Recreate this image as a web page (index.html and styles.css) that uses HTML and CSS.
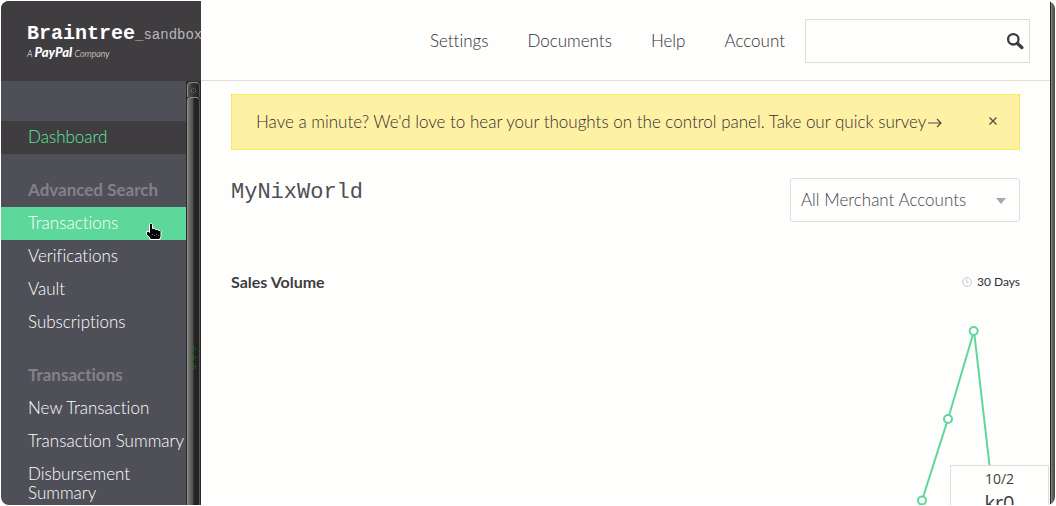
FILE: index.html
```html
<!DOCTYPE html>
<html lang="en">
<head>
<meta charset="utf-8">
<title>Braintree Sandbox - Dashboard</title>
<link rel="stylesheet" href="styles.css">
</head>
<body>
<div class="app">
  <aside class="sidebar">
    <a class="brand" href="#">
      <span class="brand-line"><b class="brand-name">Braintree</b><span class="brand-env">_sandbox</span></span>
      <span class="brand-sub">A <b class="brand-parent">PayPal</b> Company</span>
    </a>
    <div class="side-body">
      <nav class="side-nav" aria-label="Main">
        <a class="side-link current" href="#">Dashboard</a>
        <h2 class="side-heading">Advanced Search</h2>
        <a class="side-link hovered" href="#">Transactions</a>
        <a class="side-link" href="#">Verifications</a>
        <a class="side-link" href="#">Vault</a>
        <a class="side-link" href="#">Subscriptions</a>
        <h2 class="side-heading">Transactions</h2>
        <a class="side-link" href="#">New Transaction</a>
        <a class="side-link" href="#">Transaction Summary</a>
        <a class="side-link" href="#">Disbursement Summary</a>
      </nav>
      <div class="side-scroll">
        <div class="side-cap">
          <svg width="5" height="5" viewBox="0 0 5 5" aria-hidden="true"><path fill="#777" d="M2 0h1v1H2zM0 1h1v1H0zM4 1h1v1H4zM0 3h1v1H0zM4 3h1v1H4zM2 4h1v1H2z"/></svg>
        </div>
        <div class="side-thumb">
          <svg width="5" height="23" viewBox="0 0 5 23" aria-hidden="true">
            <path fill="#159415" d="M2 0h1v1H2zM2 2h1v1H2zM0 2h1v1H0zM4 2h1v1H4zM2 4h1v1H2zM2 9h1v1H2zM2 11h1v1H2zM0 11h1v1H0zM4 11h1v1H4zM2 13h1v1H2zM2 18h1v1H2zM2 20h1v1H2zM0 20h1v1H0zM4 20h1v1H4zM2 22h1v1H2z"/>
          </svg>
        </div>
      </div>
    </div>
  </aside>
  <div class="content">
    <header class="topbar">
      <nav class="top-nav" aria-label="Account">
        <a href="#">Settings</a>
        <a href="#">Documents</a>
        <a href="#">Help</a>
        <a href="#">Account</a>
      </nav>
      <form class="search">
        <input class="search-input" type="search" aria-label="Search">
        <button class="search-button" type="submit" aria-label="Search">
          <svg width="18" height="18" viewBox="0 0 18 18"><circle cx="7.3" cy="7.3" r="5.2" fill="none" stroke="#403d40" stroke-width="2.3"/><path d="M11.5 11.5l4.3 4" stroke="#403d40" stroke-width="3.4" stroke-linecap="round"/></svg>
        </button>
      </form>
    </header>
    <main class="main">
      <div class="notice">
        <a class="notice-text" href="#">Have a minute? We'd love to hear your thoughts on the control panel. Take our quick survey<svg width="14" height="10" viewBox="0 0 14 10" aria-hidden="true"><path d="M0 5h13M9 1l4 4-4 4" fill="none" stroke="#504d46" stroke-width="1.2"/></svg></a>
        <button class="notice-close" type="button" aria-label="Dismiss">
          <svg width="8" height="8" viewBox="0 0 8 8"><path d="M.5 .5l7 7M7.5 .5l-7 7" stroke="#504d46" stroke-width="1.3"/></svg>
        </button>
      </div>
      <div class="title-row">
        <h1 class="title">MyNixWorld</h1>
        <div class="account">
          <select class="account-select" aria-label="Merchant account"><option>All Merchant Accounts</option></select>
          <svg class="account-arrow" width="10" height="6" viewBox="0 0 10 6" aria-hidden="true"><path d="M0 0h10L5 6z" fill="#a9a9ab"/></svg>
        </div>
      </div>
      <div class="chart-head">
        <h2 class="chart-title">Sales Volume</h2>
        <button class="range" type="button">
          <svg width="10" height="10" viewBox="0 0 10 10" aria-hidden="true"><circle cx="5" cy="5" r="4.4" fill="none" stroke="#c9c9cb"/><path d="M4.8 2v3.5h2" fill="none" stroke="#c9c9cb"/></svg>
          30 Days
        </button>
      </div>
      <div class="chart">
        <svg class="plot" width="130" height="190" viewBox="0 0 130 190" role="img" aria-label="Sales volume line chart">
          <path d="M29 195L32 185.500 58 104 84 16 102 172" fill="none" stroke="#5ed79a" stroke-width="2"/>
          <g fill="#fefefd" stroke="#5ed79a" stroke-width="2"><circle cx="32" cy="185.500" r="4"/><circle cx="58" cy="104" r="4"/><circle cx="83.700" cy="16" r="4"/></g>
        </svg>
        <div class="tip"><span class="tip-date">10/2</span><span class="tip-value">kr0</span></div>
      </div>
    </main>
  </div>
  <div class="page-scroll"></div>
  <svg class="pointer" width="16" height="18" viewBox="0 0 16 18" aria-hidden="true">
    <path d="M3.500 1.500l1-1h1l1 1v4h2l1 1h2l1 1h1.500l1 1V14l-1 1v1.500H4V15l-3.500-3.500V8.500h2l1 1z" fill="#050505" stroke="#fff" stroke-width="1"/>
    <path d="M6 11h1v1H6zM8 12h1v1H8zM10 11h1v1h-1zM12 12h1v1h-1z" fill="#777"/>
  </svg>
</div>
</body>
</html>
```
FILE: styles.css
```css
* { box-sizing: border-box; }
body {
  margin: 0;
  padding: 1px;
  height: 100vh;
  background: #fff;
  color: #2f2d34;
  font: 300 17px/19px Lato, "Liberation Sans", sans-serif;
  font-variant-ligatures: none;
}
a { color: inherit; text-decoration: none; }
h1, h2 { margin: 0; }
button { padding: 0; border: 0; background: none; color: inherit; font: inherit; cursor: pointer; }
svg { display: block; }

.app {
  position: relative;
  display: flex;
  height: 100%;
  overflow: hidden;
  border-radius: 8px;
  background: #fefefd;
}

.sidebar { display: flex; flex-direction: column; flex: 0 0 200px; min-width: 0; background: #4f4f58; }
.brand {
  display: flex;
  flex-direction: column;
  flex: none;
  height: 80px;
  padding: 22px 0 0 26px;
  overflow: hidden;
  background: #403d40;
  color: #fff;
  white-space: nowrap;
}
.brand-line { line-height: 22px; font-family: "Liberation Mono", monospace; }
.brand-name { font: 700 20px/22px "Liberation Mono", monospace; }
.brand-env { color: #b9b7ba; font-size: 14px; font-weight: 400; }
.brand-sub { font-size: 9px; font-style: italic; font-weight: 300; line-height: 12px; }
.brand-parent { font-size: 13px; font-weight: 900; }

.side-body { display: flex; flex: 1; min-height: 0; }
.side-nav { flex: 1; min-width: 0; padding-top: 40px; overflow: hidden; }
.side-link, .side-heading { display: block; padding: 6px 0 8px 27px; font-size: 17px; line-height: 19px; }
.side-link { color: #fff; }
.side-link.current { background: #403d40; color: #5eea9f; }
.side-link.hovered { background: #5ed79a; color: #fff; }
.side-heading { margin-top: 20px; color: #838189; font-weight: 700; }
.side-scroll { display: flex; flex-direction: column; flex: 0 0 15px; padding: 1px 1px 0 1px; background: #2a2a29; }
.side-cap, .side-thumb {
  display: flex;
  align-items: center;
  justify-content: center;
  flex: none;
  border: 1px solid #8b8b88;
  border-right-color: #555;
  border-radius: 4px 4px 0 0;
  background: linear-gradient(90deg, #777772, #4a4a48 48%, #252423 52%, #222);
}
.side-cap { height: 15px; border-bottom: 0; background: linear-gradient(90deg, #555552, #333 48%, #252423); }
.side-thumb { height: 520px; }

.content { display: flex; flex-direction: column; flex: 1; min-width: 0; }
.topbar {
  display: flex;
  align-items: center;
  justify-content: flex-end;
  gap: 20px;
  flex: none;
  height: 80px;
  padding-right: 20px;
  border-bottom: 1px solid #dededf;
}
.top-nav { display: flex; gap: 39px; }
.search { display: flex; width: 225px; height: 44px; border: 1px solid #dededf; }
.search-input { flex: 1; min-width: 0; padding: 0 10px; border: 0; outline: 0; background: none; font: inherit; }
.search-button { display: flex; align-items: center; padding: 0 5px; }

.main { display: flex; flex-direction: column; flex: 1; min-height: 0; padding: 13px 30px 0; }
.notice {
  display: flex;
  align-items: center;
  justify-content: space-between;
  flex: none;
  height: 56px;
  padding: 0 22px 2px 24px;
  border: 1px dotted #f5e022;
  background: #fff1a3;
}
.notice-text svg { display: inline-block; margin-left: 2px; }
.title-row { display: flex; justify-content: space-between; flex: none; margin-top: 28px; }
.title { font: 400 22px/30px "Liberation Mono", monospace; color: #504e56; }
.account { position: relative; width: 230px; }
.account-select {
  width: 100%;
  height: 44px;
  padding: 0 10px 2px;
  border: 1px solid #dededf;
  border-radius: 3px;
  appearance: none;
  background: #fefefd;
  color: #45434b;
  font: inherit;
}
.account-arrow { position: absolute; top: 20px; right: 14px; pointer-events: none; }
.chart-head { display: flex; justify-content: space-between; align-items: center; flex: none; margin-top: 50px; }
.chart-title { color: #403d40; font-size: 16px; line-height: 20px; }
.range { display: flex; align-items: center; gap: 5px; font-size: 12px; font-weight: 400; line-height: 20px; }
.chart { position: relative; flex: 1; min-height: 0; margin: 23px -30px 0 0; }
.plot { position: absolute; top: 0; right: 30px; }
.tip {
  position: absolute;
  top: 150px;
  right: 1px;
  display: flex;
  flex-direction: column;
  align-items: center;
  width: 99px;
  height: 70px;
  padding-top: 3px;
  border: 1px solid #dededf;
  background: #fefefd;
  color: #403d40;
  font-family: "Open Sans", sans-serif;
  font-weight: 400;
}
.tip-date { font-size: 14px; line-height: 20px; }
.tip-value { font-size: 20px; line-height: 28px; }

.page-scroll {
  flex: 0 0 5px;
  border-left: 1px solid #222;
  background: linear-gradient(90deg, #888883, #555552 60%, #4a4a48);
}
.pointer { position: absolute; left: 145px; top: 222px; pointer-events: none; }
```
